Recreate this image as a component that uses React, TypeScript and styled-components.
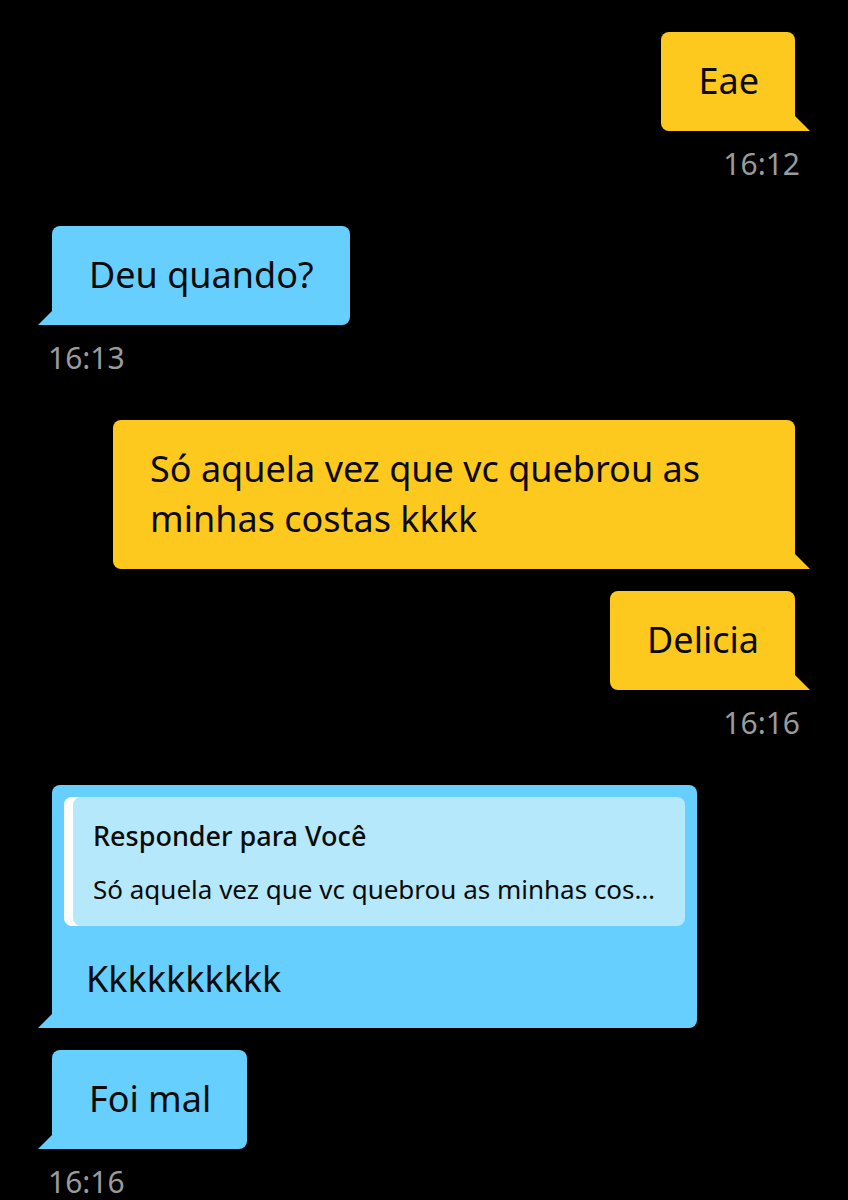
import React, {FC} from "react";
import styled, {createGlobalStyle, css} from "styled-components";

const yellow = '#FEC91E'
const blue = '#66CFFD'
const quoteBlue = '#B6E8FC'
const timeGrey = '#9B9B9B'
const font = `"Noto Sans", "Open Sans", sans-serif`

const GlobalStyle = createGlobalStyle`
  html, body {
    margin: 0;
    padding: 0;
    background: #000;
  }
  body {
    font-family: ${font};
  }
`
const Page = styled.div`
  width: 848px;
  height: 1200px;
  background: #000;
  overflow: hidden;
  box-sizing: border-box;
  padding: 32px 53px 0 52px;
  display: flex;
  flex-direction: column;
`
const Group = styled.div<{ $side: 'me' | 'them' }>`
  display: flex;
  flex-direction: column;
  align-items: ${p => p.$side === 'me' ? 'flex-end' : 'flex-start'};
  gap: 22px;
  margin-bottom: 46px;
`
const Bubble = styled.div<{ $side: 'me' | 'them' }>`
  position: relative;
  box-sizing: border-box;
  max-width: 682px;
  padding: 24px 36px 25px 37px;
  font-size: 36px;
  line-height: 50px;
  color: #0b0b0b;
  background: ${p => p.$side === 'me' ? yellow : blue};
  border-radius: ${p => p.$side === 'me' ? '8px 8px 0 8px' : '8px 8px 8px 0'};
  &::after {
    content: '';
    position: absolute;
    bottom: 0;
    width: 15px;
    height: 15px;
    background: inherit;
    ${p => p.$side === 'me'
      ? css`right: -15px; clip-path: polygon(0 0, 100% 100%, 0 100%);`
      : css`left: -14px; clip-path: polygon(100% 0, 100% 100%, 0 100%);`}
  }
`
const ReplyBubble = styled(Bubble)`
  width: 645px;
  padding: 12px 12px 24px;
`
const Quote = styled.div`
  background: ${quoteBlue};
  border-radius: 8px;
  box-shadow: inset 9px 0 0 #fff;
  padding: 22px 22px 20px 29px;
  margin-bottom: 28px;
`
const QuoteTitle = styled.div`
  font-size: 27px;
  line-height: 34px;
  font-weight: 500;
  margin-bottom: 19px;
`
const QuoteText = styled.div`
  font-size: 26px;
  line-height: 34px;
  white-space: nowrap;
  overflow: hidden;
  text-overflow: ellipsis;
`
const ReplyText = styled.div`
  padding: 0 22px;
`
const Time = styled.div<{ $side: 'me' | 'them' }>`
  font-size: 30px;
  line-height: 32px;
  color: ${timeGrey};
  margin-top: -5px;
  ${p => p.$side === 'me' ? css`margin-right: -5px;` : css`margin-left: -4px;`}
`

interface Message {
  side: 'me' | 'them'
  texts: string[]
  time?: string
}

const groups: Message[] = [
  {side: 'me', texts: ['Eae'], time: '16:12'},
  {side: 'them', texts: ['Deu quando?'], time: '16:13'},
  {side: 'me', texts: ['Só aquela vez que vc quebrou as minhas costas kkkk', 'Delicia'], time: '16:16'},
]

const App: FC = () => {
  return (
    <>
      <GlobalStyle/>
      <Page>
        {groups.map((g, i) => (
          <Group key={i} $side={g.side}>
            {g.texts.map(t => (
              <Bubble key={t} $side={g.side}>{t}</Bubble>
            ))}
            {g.time && <Time $side={g.side}>{g.time}</Time>}
          </Group>
        ))}
        <Group $side="them">
          <ReplyBubble $side="them">
            <Quote>
              <QuoteTitle>Responder para Você</QuoteTitle>
              <QuoteText>Só aquela vez que vc quebrou as minhas costas kkkk</QuoteText>
            </Quote>
            <ReplyText>Kkkkkkkkkk</ReplyText>
          </ReplyBubble>
          <Bubble $side="them">Foi mal</Bubble>
          <Time $side="them">16:16</Time>
        </Group>
      </Page>
    </>
  )
}

export default App
